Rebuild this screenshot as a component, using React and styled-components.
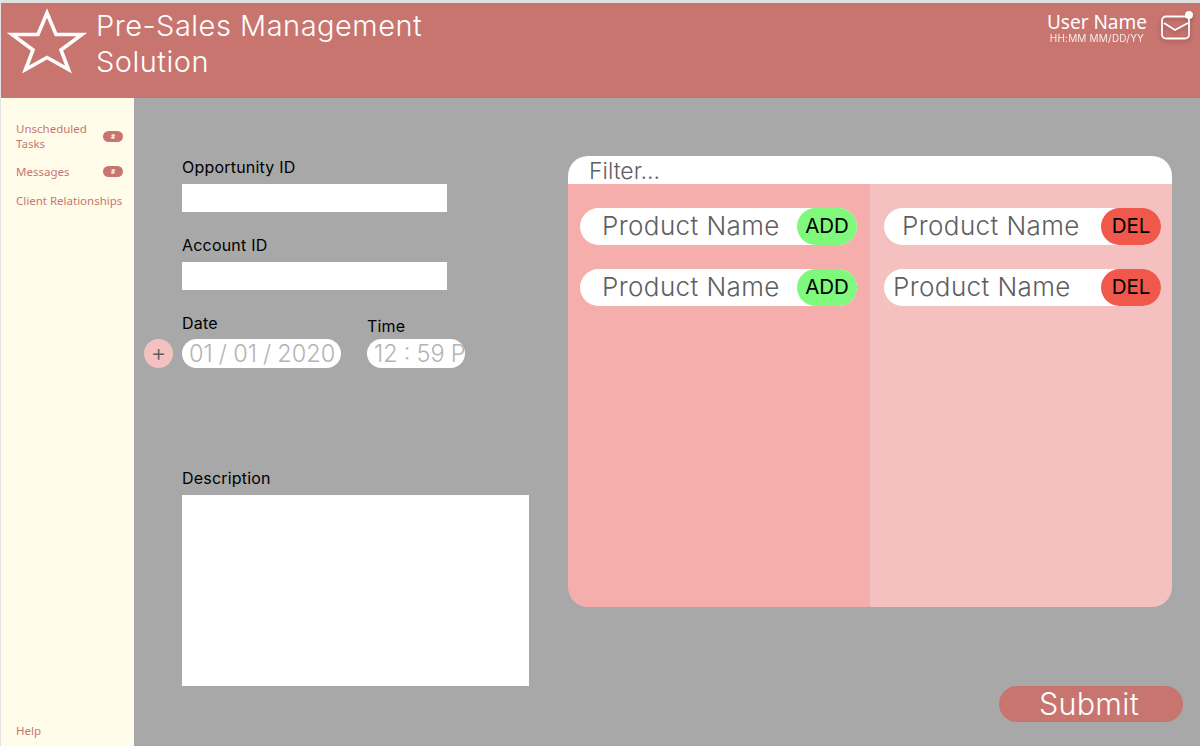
import React from 'react';
import styled, { createGlobalStyle } from 'styled-components';

const GlobalStyle = createGlobalStyle`
  html, body {
    margin: 0;
    padding: 0;
    background: #a9a8a8;
    font-family: 'Inter', 'Liberation Sans', sans-serif;
  }
`;

const Page = styled.div`
  width: 1200px;
  height: 746px;
  box-sizing: border-box;
  display: flex;
  flex-direction: column;
  overflow: hidden;
  border-left: 1px solid #e4e4e4;
  background: #a9a8a8;
`;

const TopStrip = styled.div`
  height: 3px;
  flex-shrink: 0;
  background: #e0e0e0;
`;

const Header = styled.header`
  height: 95px;
  flex-shrink: 0;
  display: flex;
  align-items: flex-start;
  background: #c87570;
  color: #fff;
`;

const Logo = styled.svg`
  width: 80px;
  height: 66px;
  margin: 5px 0 0 6px;
  flex-shrink: 0;
`;

const Title = styled.h1`
  width: 380px;
  margin: 5px 0 0 9px;
  font-family: 'Inter', sans-serif;
  font-size: 29px;
  font-weight: 300;
  line-height: 36px;
  letter-spacing: 0.5px;
`;

const UserArea = styled.div`
  margin-left: auto;
  display: flex;
  align-items: flex-start;
  padding: 8px 5px 0 0;
`;

const UserText = styled.div`
  display: flex;
  flex-direction: column;
  align-items: center;
  margin-right: 14px;
`;

const UserName = styled.div`
  font-family: 'Noto Sans', sans-serif;
  font-size: 19px;
  line-height: 22px;
`;

const UserDate = styled.div`
  font-family: 'Inter', sans-serif;
  font-size: 10px;
  line-height: 11px;
  letter-spacing: 0.2px;
  opacity: 0.85;
`;

const MailIcon = styled.svg`
  width: 34px;
  height: 34px;
  margin-top: -1px;
  overflow: visible;
  filter: drop-shadow(0 2px 2px rgba(90, 40, 40, 0.45));
`;

const Body = styled.div`
  flex: 1;
  display: flex;
  min-height: 0;
`;

const Sidebar = styled.nav`
  width: 133px;
  flex-shrink: 0;
  display: flex;
  flex-direction: column;
  padding: 23px 11px 8px 15px;
  box-sizing: border-box;
  background: #fffdea;
  font-family: 'Noto Sans', sans-serif;
  font-size: 11.5px;
  line-height: 15px;
  color: #c87570;
`;

const NavItem = styled.div`
  display: flex;
  align-items: center;
  justify-content: space-between;
  margin-bottom: ${(props) => props.gap}px;
`;

const NavLabel = styled.span`
  width: ${(props) => (props.$wrap ? '80px' : 'auto')};
  white-space: ${(props) => (props.$wrap ? 'normal' : 'nowrap')};
`;

const Badge = styled.span`
  width: 20px;
  height: 11px;
  border-radius: 6px;
  background: #c87570;
  color: #fff;
  font-size: 7px;
  font-weight: 700;
  line-height: 11px;
  text-align: center;
`;

const HelpLink = styled.div`
  margin-top: auto;
`;

const Main = styled.main`
  flex: 1;
  display: flex;
  padding: 58px 17px 24px 10px;
  color: #000;
`;

const FormColumn = styled.div`
  width: 424px;
  flex-shrink: 0;
  display: flex;
  flex-direction: column;
  padding-top: 1px;
`;

const Field = styled.div`
  padding-left: 38px;
  margin-top: ${(props) => props.top || 0}px;
  margin-bottom: ${(props) => props.gap}px;
`;

const Label = styled.div`
  font-family: 'Inter', sans-serif;
  font-size: 16px;
  line-height: 20px;
  letter-spacing: 0.2px;
  margin-bottom: 7px;
`;

const TextBox = styled.div`
  width: 265px;
  height: 28px;
  background: #fff;
`;

const DateRow = styled.div`
  display: flex;
  align-items: flex-end;
  height: 60px;
`;

const PlusButton = styled.div`
  width: 29px;
  height: 29px;
  margin-right: 9px;
  border-radius: 50%;
  background: #f3c1bf;
  color: #5f5f5f;
  font-size: 24px;
  font-weight: 300;
  line-height: 28px;
  text-align: center;
`;

const DateField = styled.div`
  width: ${(props) => props.width}px;
  margin-right: 26px;
`;

const DateLabel = styled(Label)`
  margin-bottom: ${(props) => props.gap}px;
`;

const DatePill = styled.div`
  height: 29px;
  padding-left: 7px;
  border-radius: 15px;
  overflow: hidden;
  white-space: nowrap;
  background: #fff;
  color: #b4b4b4;
  font-size: 23.5px;
  font-weight: 300;
  line-height: 29px;
  word-spacing: -0.5px;
`;

const DescriptionBox = styled.div`
  width: 347px;
  height: 191px;
  background: #fff;
`;

const RightColumn = styled.div`
  flex: 1;
  display: flex;
  flex-direction: column;
`;

const ProductPanel = styled.section`
  width: 604px;
  height: 451px;
  display: flex;
  flex-direction: column;
  border-radius: 20px;
  overflow: hidden;
`;

const FilterBar = styled.div`
  height: 28px;
  flex-shrink: 0;
  padding-left: 21px;
  background: #fff;
  color: #5f5f5f;
  font-size: 23px;
  font-weight: 300;
  line-height: 30px;
`;

const Lists = styled.div`
  flex: 1;
  display: grid;
  grid-template-columns: 302px 302px;
`;

const List = styled.div`
  display: flex;
  flex-direction: column;
  gap: 24px;
  padding: 24px ${(props) => props.$right}px 0 ${(props) => props.$left}px;
  background: ${(props) => props.bg};
`;

const ProductPill = styled.div`
  height: 37px;
  display: flex;
  align-items: center;
  justify-content: space-between;
  padding-left: ${(props) => props.indent}px;
  border-radius: 19px;
  background: #fff;
`;

const ProductName = styled.span`
  color: #5f5f5f;
  font-size: 26px;
  font-weight: 300;
  line-height: 34px;
  margin-bottom: 2px;
  letter-spacing: 0.4px;
`;

const ActionButton = styled.div`
  width: 60px;
  height: 37px;
  border-radius: 19px;
  background: ${(props) => props.bg};
  color: #000;
  font-size: 20.5px;
  font-weight: 400;
  line-height: 36px;
  text-align: center;
`;

const SubmitButton = styled.div`
  width: 180px;
  height: 36px;
  margin-top: 79px;
  padding-right: 4px;
  align-self: flex-end;
  border-radius: 18px;
  background: #c87570;
  color: #fff;
  font-size: 30.5px;
  font-weight: 300;
  line-height: 36px;
  letter-spacing: 0.3px;
  text-align: center;
`;

const products = [
  { id: 1, indent: 22 },
  { id: 2, indent: 22 },
];

const selected = [
  { id: 3, indent: 18 },
  { id: 4, indent: 9 },
];

const App = () => (
  <Page>
    <GlobalStyle />
    <TopStrip />
    <Header>
      <Logo viewBox="0 0 80 66" aria-hidden="true">
        <polygon
          points="40,5 49,26.5 75,26.5 54,42 61.5,61.5 40,49.5 18.5,61.5 26,42 5,26.5 31,26.5"
          fill="none"
          stroke="#fff"
          strokeWidth="3.6"
          strokeLinejoin="miter"
        />
      </Logo>
      <Title>Pre-Sales Management Solution</Title>
      <UserArea>
        <UserText>
          <UserName>User Name</UserName>
          <UserDate>HH:MM MM/DD/YY</UserDate>
        </UserText>
        <MailIcon viewBox="0 0 34 34" aria-hidden="true">
          <rect x="1" y="6.5" width="27" height="22" rx="4" fill="none" stroke="#fff" strokeWidth="1.8" />
          <path d="M3 13 L14 20 L27 13" fill="none" stroke="#fff" strokeWidth="1.8" />
          <circle cx="28" cy="5" r="4" fill="#fff" />
        </MailIcon>
      </UserArea>
    </Header>
    <Body>
      <Sidebar>
        <NavItem gap={13}>
          <NavLabel $wrap>Unscheduled Tasks</NavLabel>
          <Badge>#</Badge>
        </NavItem>
        <NavItem gap={14}>
          <NavLabel>Messages</NavLabel>
          <Badge>#</Badge>
        </NavItem>
        <NavItem gap={0}>
          <NavLabel>Client Relationships</NavLabel>
        </NavItem>
        <HelpLink>Help</HelpLink>
      </Sidebar>
      <Main>
        <FormColumn>
          <Field gap={23}>
            <Label>Opportunity ID</Label>
            <TextBox />
          </Field>
          <Field gap={18}>
            <Label>Account ID</Label>
            <TextBox />
          </Field>
          <DateRow>
            <PlusButton>+</PlusButton>
            <DateField width={159}>
              <DateLabel gap={6}>Date</DateLabel>
              <DatePill>01 / 01 / 2020</DatePill>
            </DateField>
            <DateField width={98}>
              <DateLabel gap={3}>Time</DateLabel>
              <DatePill>12 : 59 P</DatePill>
            </DateField>
          </DateRow>
          <Field top={100} gap={0}>
            <Label>Description</Label>
            <DescriptionBox />
          </Field>
        </FormColumn>
        <RightColumn>
          <ProductPanel>
            <FilterBar>Filter...</FilterBar>
            <Lists>
              <List bg="#f5aeac" $left={12} $right={13}>
                {products.map((item) => (
                  <ProductPill key={item.id} indent={item.indent}>
                    <ProductName>Product Name</ProductName>
                    <ActionButton bg="#7ef97c">ADD</ActionButton>
                  </ProductPill>
                ))}
              </List>
              <List bg="#f4c1c0" $left={14} $right={11}>
                {selected.map((item) => (
                  <ProductPill key={item.id} indent={item.indent}>
                    <ProductName>Product Name</ProductName>
                    <ActionButton bg="#f0584c">DEL</ActionButton>
                  </ProductPill>
                ))}
              </List>
            </Lists>
          </ProductPanel>
          <SubmitButton>Submit</SubmitButton>
        </RightColumn>
      </Main>
    </Body>
  </Page>
);

export default App;
